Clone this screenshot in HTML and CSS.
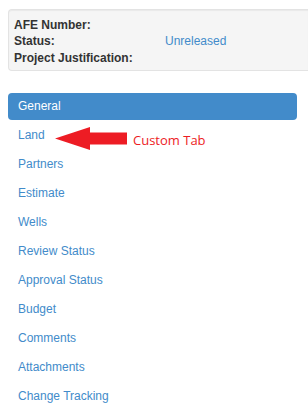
FILE: index.html
```html
<!DOCTYPE html>
<html>
<head>
<meta charset="utf-8">
<link rel="stylesheet" href="styles.css">
</head>
<body>
<div class="page">
  <div class="summary">
    <div class="summary-label">AFE Number:</div>
    <div class="summary-value"></div>
    <div class="summary-label">Status:</div>
    <div class="summary-value"><a class="link" href="#">Unreleased</a></div>
    <div class="summary-label">Project Justification:</div>
    <div class="summary-value"></div>
  </div>
  <ul class="nav">
    <li class="nav-item active"><a href="#">General</a></li>
    <li class="nav-item"><a href="#">Land</a>
      <div class="callout">
        <svg class="callout-arrow" width="72" height="25" viewBox="0 0 72 25">
          <polygon points="0,11.5 35,0 35,5.5 72,5.5 72,17.5 35,17.5 35,23" fill="#ed1c24"/>
        </svg>
        <span class="callout-text">Custom Tab</span>
      </div>
    </li>
    <li class="nav-item"><a href="#">Partners</a></li>
    <li class="nav-item"><a href="#">Estimate</a></li>
    <li class="nav-item"><a href="#">Wells</a></li>
    <li class="nav-item"><a href="#">Review Status</a></li>
    <li class="nav-item"><a href="#">Approval Status</a></li>
    <li class="nav-item"><a href="#">Budget</a></li>
    <li class="nav-item"><a href="#">Comments</a></li>
    <li class="nav-item"><a href="#">Attachments</a></li>
    <li class="nav-item"><a href="#">Change Tracking</a></li>
  </ul>
</div>
</body>
</html>
```
FILE: styles.css
```css
html, body {
  margin: 0;
  padding: 0;
  background: #ffffff;
  overflow: hidden;
}
body {
  font-family: "Liberation Sans", Arial, sans-serif;
  font-size: 12px;
  color: #333333;
}
.page {
  padding: 9px 11px 0 8px;
}
.summary {
  display: grid;
  grid-template-columns: 151px 1fr;
  background: #f5f5f5;
  border: 1px solid #e3e3e3;
  border-right: none;
  border-radius: 4px 0 0 4px;
  padding: 7px 5px 4px 5px;
  margin-right: -11px;
  line-height: 16.3px;
  box-shadow: inset 0 1px 1px rgba(0,0,0,0.05);
}
.summary-label {
  font-weight: bold;
  color: #333333;
  white-space: nowrap;
}
.link {
  color: #428bca;
  text-decoration: none;
}
.nav {
  list-style: none;
  margin: 22px 0 0 0;
  padding: 0;
}
.nav-item {
  position: relative;
  margin-top: 2px;
}
.nav-item:first-child {
  margin-top: 0;
}
.nav-item a {
  display: block;
  padding: 5px 10px;
  line-height: 17px;
  color: #428bca;
  text-decoration: none;
  border-radius: 4px;
}
.nav-item.active a {
  background: #428bca;
  color: #ffffff;
}
.callout {
  position: absolute;
  left: 47px;
  top: 5px;
  display: flex;
  align-items: center;
  gap: 6px;
}
.callout-arrow {
  display: block;
}
.callout-text {
  font-family: "Open Sans", "Noto Sans", sans-serif;
  font-size: 13px;
  color: #ed1c24;
  line-height: 18px;
  margin-top: 1px;
}
```
